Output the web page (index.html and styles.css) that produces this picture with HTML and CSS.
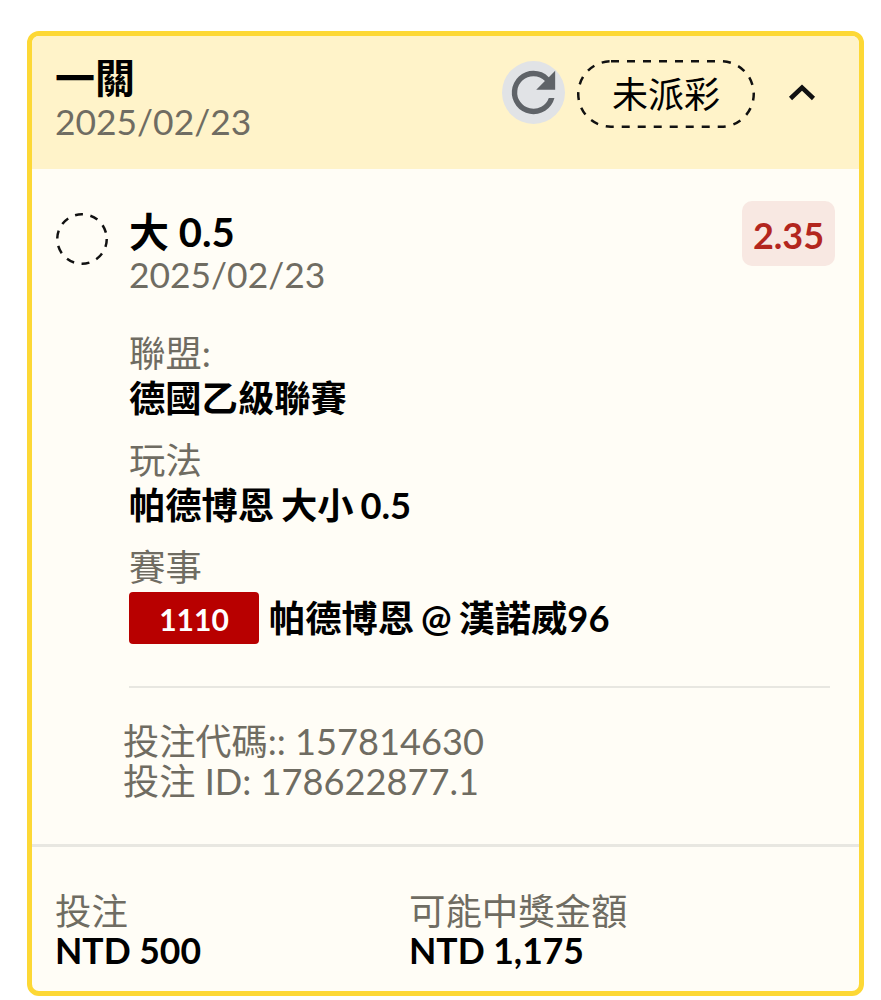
FILE: index.html
```html
<!DOCTYPE html>
<html>
<head>
  <meta charset="utf-8">
  <title>一關</title>
  <link rel="stylesheet" href="styles.css">
</head>
<body>
  <div class="card">
    <div class="card-head">
      <div class="head-text">
        <div class="head-title">一關</div>
        <div class="date">2025/02/23</div>
      </div>
      <div class="head-actions">
        <div class="refresh">
          <svg class="refresh-icon" width="65" height="65" viewBox="0 0 24 24"><path fill="#5f6368" d="M17.65 6.35A7.96 7.96 0 0 0 12 4a8 8 0 1 0 7.73 10h-2.08A6 6 0 1 1 12 6c1.66 0 3.14.69 4.22 1.78L13 11h7V4l-2.35 2.35z"/></svg>
        </div>
        <div class="status">
          <svg class="dash" width="178" height="68" viewBox="0 0 178 68"><rect x="1.250" y="1.250" width="175.500" height="65.500" rx="32.750" fill="none" stroke="#111" stroke-width="2.500" stroke-dasharray="8 8"/></svg>
          未派彩
        </div>
        <svg class="chevron" width="28" height="18" viewBox="0 0 28 18"><path d="M2.500 15.500 14 4.500 25.500 15.500" fill="none" stroke="#111" stroke-width="4.500"/></svg>
      </div>
    </div>

    <div class="card-body">
      <div class="selection">
        <svg class="circle" width="52" height="52" viewBox="0 0 52 52"><circle cx="26" cy="26" r="24.750" fill="none" stroke="#111" stroke-width="2.500" stroke-dasharray="8 7.550"/></svg>
        <div class="selection-text">
          <div class="selection-title">大 0.5</div>
          <div class="date">2025/02/23</div>
        </div>
        <div class="odds">2.35</div>
      </div>

      <div class="details">
        <div class="detail">
          <div class="label">聯盟:</div>
          <div class="value">德國乙級聯賽</div>
        </div>
        <div class="detail">
          <div class="label">玩法</div>
          <div class="value">帕德博恩 大小 0.5</div>
        </div>
        <div class="detail">
          <div class="label">賽事</div>
          <div class="match">
            <span class="match-no">1110</span>
            <span class="value">帕德博恩 @ 漢諾威96</span>
          </div>
        </div>
      </div>

      <div class="codes">
        <div>投注代碼:: 157814630</div>
        <div>投注 ID: 178622877.1</div>
      </div>
    </div>

    <div class="card-foot">
      <div class="foot-col">
        <div class="label">投注</div>
        <div class="value">NTD 500</div>
      </div>
      <div class="foot-col">
        <div class="label">可能中獎金額</div>
        <div class="value">NTD 1,175</div>
      </div>
    </div>
  </div>
</body>
</html>
```

FILE: styles.css
```css
body {
  margin: 0;
  padding: 31px 17px 3px 27px;
  background: #fff;
  font-family: Lato, "Noto Sans CJK TC", sans-serif;
  color: #000;
}

.card {
  border: 5px solid #fdd835;
  border-radius: 12px;
  background: #fffdf6;
  overflow: hidden;
}

.card-head {
  display: flex;
  justify-content: space-between;
  height: 133px;
  padding: 0 24px 0 23px;
  background: #fff3c9;
}

.head-text {
  padding-top: 18px;
}

.head-title {
  font-size: 40px;
  font-weight: 700;
  line-height: 49px;
}

.date {
  font-size: 35.400px;
  line-height: 38px;
  color: #6f6c62;
}

.head-actions {
  display: flex;
  align-items: center;
  height: 116px;
}

.refresh {
  display: flex;
  align-items: center;
  justify-content: center;
  width: 63px;
  height: 63px;
  margin-bottom: 4px;
  border-radius: 50%;
  background: #e1e3e6;
}

.refresh-icon {
  flex-shrink: 0;
}

.status {
  position: relative;
  width: 178px;
  height: 68px;
  margin-left: 12px;
  font-size: 36px;
  line-height: 68px;
  text-align: center;
}

.dash {
  position: absolute;
  top: 0;
  left: 0;
}

.chevron {
  margin: 0 19px 4px 33px;
}

.card-body {
  padding: 32px 24px 0;
  height: 678px;
  box-sizing: border-box;
  border-bottom: 3px solid #e8e7e1;
}

.selection {
  display: flex;
  align-items: flex-start;
}

.circle {
  margin-top: 12px;
  flex-shrink: 0;
}

.selection-text {
  flex: 1;
  margin-left: 21px;
}

.selection-title {
  font-size: 40px;
  font-weight: 700;
  line-height: 47px;
  margin-top: 8px;
}

.odds {
  width: 93px;
  height: 65px;
  border-radius: 10px;
  background: #f8e8e2;
  color: #b3261e;
  font-size: 36px;
  font-weight: 700;
  line-height: 68px;
  text-align: center;
}

.details {
  margin: 37px 5px 0 73px;
  padding-bottom: 42px;
  border-bottom: 2px solid #e8e7e1;
}

.detail {
  margin-top: 17px;
}

.label {
  font-size: 36.400px;
  line-height: 45px;
  color: #6f6c62;
}

.value {
  font-size: 36.300px;
  font-weight: 700;
  line-height: 45px;
  word-spacing: -2px;
}

.match {
  display: flex;
  align-items: center;
  gap: 10px;
  margin-top: 2px;
}

.match-no {
  width: 130px;
  height: 52px;
  border-radius: 4px;
  background: #b80000;
  color: #fff;
  font-size: 30px;
  font-weight: 700;
  line-height: 54px;
  text-align: center;
}

.codes {
  margin: 33px 0 0 67px;
  font-size: 36.200px;
  line-height: 40px;
  color: #6f6c62;
}

.card-foot {
  display: flex;
  padding: 45px 24px 21px 23px;
}

.foot-col {
  width: 354px;
}

.card-foot .label {
  line-height: 39px;
}

.card-foot .value {
  font-size: 35.500px;
  line-height: 39px;
  word-spacing: 0;
}
```
